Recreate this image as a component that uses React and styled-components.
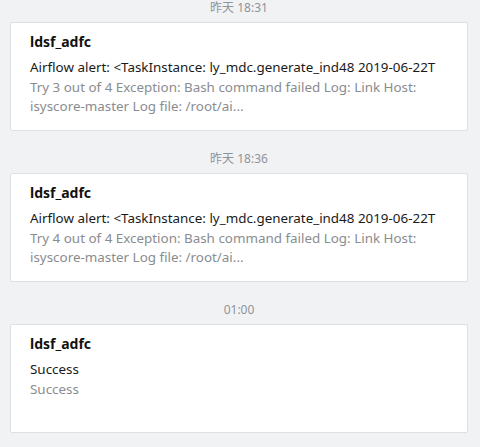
import React from "react";
import styled, { createGlobalStyle } from "styled-components";

const GlobalStyle = createGlobalStyle`
  html, body {
    margin: 0;
    padding: 0;
    background: #f1f2f4;
    font-family: "Noto Sans", "Noto Sans CJK SC", sans-serif;
  }
`;

const List = styled.div`
  padding: 0 12px 0 10px;
`;

const Time = styled.div`
  margin: ${(p) => (p.first ? "0" : "20px")} 0 6px;
  height: 16px;
  line-height: 16px;
  font-size: 12px;
  color: #8f939a;
  text-align: center;
`;

const Card = styled.div`
  background: #fff;
  border: 1px solid #dcdfe4;
  border-radius: 2px;
  height: 107px;
  box-sizing: content-box;
  padding: 0 19px;
`;

const Title = styled.div`
  margin-top: 9px;
  font-size: 14px;
  font-weight: 700;
  line-height: 20px;
  color: #111;
`;

const Body = styled.div`
  margin-top: 6px;
  font-size: 13.4px;
  line-height: 19.6px;
`;

const Head = styled.div`
  color: #1a1a1a;
  white-space: nowrap;
`;

const Detail = styled.div`
  color: #8a8c90;
`;

const messages = [
  {
    time: "昨天 18:31",
    head: "Airflow alert: <TaskInstance: ly_mdc.generate_ind48 2019-06-22T",
    detail: ["Try 3 out of 4 Exception: Bash command failed Log: Link Host:", "isyscore-master Log file: /root/ai..."],
  },
  {
    time: "昨天 18:36",
    head: "Airflow alert: <TaskInstance: ly_mdc.generate_ind48 2019-06-22T",
    detail: ["Try 4 out of 4 Exception: Bash command failed Log: Link Host:", "isyscore-master Log file: /root/ai..."],
  },
  {
    time: "01:00",
    head: "Success",
    detail: ["Success"],
  },
];

export default function App() {
  return (
    <>
      <GlobalStyle />
      <List>
        {messages.map((m, i) => (
          <React.Fragment key={i}>
            <Time first={i === 0}>{m.time}</Time>
            <Card>
              <Title>ldsf_adfc</Title>
              <Body>
                <Head>{m.head}</Head>
                {m.detail.map((d, j) => (
                  <Detail key={j}>{d}</Detail>
                ))}
              </Body>
            </Card>
          </React.Fragment>
        ))}
      </List>
    </>
  );
}
